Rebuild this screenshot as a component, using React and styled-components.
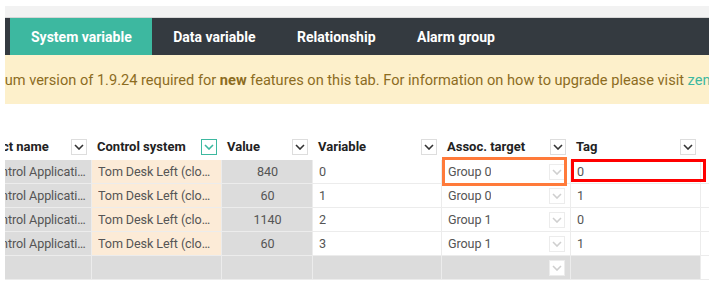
import styled, { createGlobalStyle, css } from 'styled-components'

const GlobalStyle = createGlobalStyle`
  body {
    margin: 0;
    background: #ffffff;
    font-family: Roboto, "Liberation Sans", Arial, sans-serif;
  }
`

const Page = styled.div`
  width: 709px;
  height: 282px;
  overflow: hidden;
  padding: 6px 0 0 5px;
  box-sizing: border-box;
`

const TopStrip = styled.div`
  height: 11px;
  background: #f2f2f2;
  border-bottom: 1px solid #d6d6d6;
`

const TabBar = styled.div`
  display: flex;
  height: 37px;
  background: #343a40;
  padding-left: 5px;
`

const Tab = styled.div`
  display: flex;
  align-items: center;
  padding: 0 20.5px 0 21px;
  font-size: 14px;
  font-weight: 700;
  color: #ffffff;
  background: ${({ $active }) => ($active ? '#3db8a0' : 'transparent')};
`

const Banner = styled.div`
  height: 49px;
  background: #fdf0cb;
  display: flex;
  align-items: center;
  overflow: hidden;
  white-space: nowrap;
  font-size: 14.6px;
  color: #8c6c1f;
`

const BannerText = styled.span`
  margin-left: -41px;
  b {
    font-weight: 700;
  }
  a {
    color: #3db8a0;
    text-decoration: none;
  }
`

const GridViewport = styled.div`
  margin-top: 29px;
  overflow: hidden;
`

const Grid = styled.div`
  margin-left: -43px;
  display: grid;
  grid-template-columns: 130px 130px 91px 129px 129px 130px 130px;
  width: max-content;
`

const HeaderCell = styled.div`
  height: 27px;
  display: flex;
  align-items: center;
  justify-content: space-between;
  padding: 0 5px;
  font-size: 13px;
  font-weight: 700;
  color: #222;
  box-sizing: border-box;
`

const cellTone = {
  locked: '#dcdcdc',
  source: '#fcebd7',
  plain: '#ffffff',
}

const Cell = styled.div`
  position: relative;
  min-width: 0;
  height: 24px;
  box-sizing: border-box;
  display: flex;
  align-items: center;
  justify-content: ${({ $center }) => ($center ? 'center' : 'space-between')};
  padding: 0 5px 0 6px;
  font-size: 12.6px;
  letter-spacing: -0.1px;
  color: #555;
  background: ${({ $tone }) => cellTone[$tone || 'plain']};
  border-right: 1px solid #ececec;
  border-bottom: 1px solid #ececec;
  white-space: nowrap;
  overflow: ${({ $mark }) => ($mark ? 'visible' : 'hidden')};

  ${({ $mark }) =>
    $mark &&
    css`
      z-index: 1;
      &::after {
        content: '';
        position: absolute;
        pointer-events: none;
        border: 3px solid ${$mark === 'orange' ? '#ff7a3a' : '#ff0000'};
        ${$mark === 'orange'
          ? 'top: -3px; bottom: -3px; left: 0; right: 3px;'
          : 'top: -1px; bottom: 1px; left: 0; right: -6px;'}
      }
    `}
`

const CellText = styled.span`
  display: block;
  overflow: hidden;
  text-overflow: ellipsis;
  min-width: 0;
`

const DropButton = styled.span`
  flex: none;
  width: 16px;
  height: 16px;
  box-sizing: border-box;
  display: flex;
  align-items: center;
  justify-content: center;
  background: #ffffff;
  border: 1px solid ${({ $variant }) =>
    $variant === 'active' ? '#3db8a0' : $variant === 'faint' ? '#ececec' : '#dddddd'};
  color: ${({ $variant }) =>
    $variant === 'active' ? '#3db8a0' : $variant === 'faint' ? '#cfcfcf' : '#333333'};
`

function Chevron() {
  return (
    <svg width="10" height="6" viewBox="0 0 10 6" fill="none">
      <path d="M1 1l4 4 4-4" stroke="currentColor" strokeWidth="1.6" />
    </svg>
  )
}

const columns = [
  { title: 'Product name' },
  { title: 'Control system', active: true },
  { title: 'Value' },
  { title: 'Variable' },
  { title: 'Assoc. target' },
  { title: 'Tag' },
  { title: '' },
]

const rows = [
  { value: 840, variable: 0, group: 'Group 0', tag: 0 },
  { value: 60, variable: 1, group: 'Group 0', tag: 1 },
  { value: 1140, variable: 2, group: 'Group 1', tag: 0 },
  { value: 60, variable: 3, group: 'Group 1', tag: 1 },
]

export default function App() {
  return (
    <>
      <GlobalStyle />
      <Page>
        <TopStrip />
        <TabBar>
          <Tab $active>System variable</Tab>
          <Tab>Data variable</Tab>
          <Tab>Relationship</Tab>
          <Tab>Alarm group</Tab>
        </TabBar>
        <Banner>
          <BannerText>
            Minimum version of 1.9.24 required for <b>new</b> features on this tab. For
            information on how to upgrade please visit <a href="#">zencontrol.com</a>
          </BannerText>
        </Banner>
        <GridViewport>
          <Grid>
            {columns.map((col, i) => (
              <HeaderCell key={`h${i}`}>
                <span>{col.title}</span>
                {col.title && (
                  <DropButton $variant={col.active ? 'active' : 'normal'}>
                    <Chevron />
                  </DropButton>
                )}
              </HeaderCell>
            ))}
            {rows.flatMap((row, i) => [
              <Cell key={`a${i}`} $tone="locked">
                <CellText>zencontrol Application Controller</CellText>
              </Cell>,
              <Cell key={`b${i}`} $tone="source">
                <CellText>Tom Desk Left (closed)</CellText>
              </Cell>,
              <Cell key={`c${i}`} $tone="locked" $center>
                {row.value}
              </Cell>,
              <Cell key={`d${i}`}>
                <CellText>{row.variable}</CellText>
              </Cell>,
              <Cell key={`e${i}`} $mark={i === 0 ? 'orange' : null}>
                <CellText>{row.group}</CellText>
                <DropButton $variant="faint">
                  <Chevron />
                </DropButton>
              </Cell>,
              <Cell key={`f${i}`} $mark={i === 0 ? 'red' : null}>
                <CellText>{row.tag}</CellText>
              </Cell>,
              <Cell key={`g${i}`} />,
            ])}
            <Cell $tone="locked" />
            <Cell $tone="locked" />
            <Cell $tone="locked" />
            <Cell $tone="locked" />
            <Cell $tone="locked">
              <span />
              <DropButton $variant="faint">
                <Chevron />
              </DropButton>
            </Cell>
            <Cell $tone="locked" />
            <Cell />
          </Grid>
        </GridViewport>
      </Page>
    </>
  )
}
